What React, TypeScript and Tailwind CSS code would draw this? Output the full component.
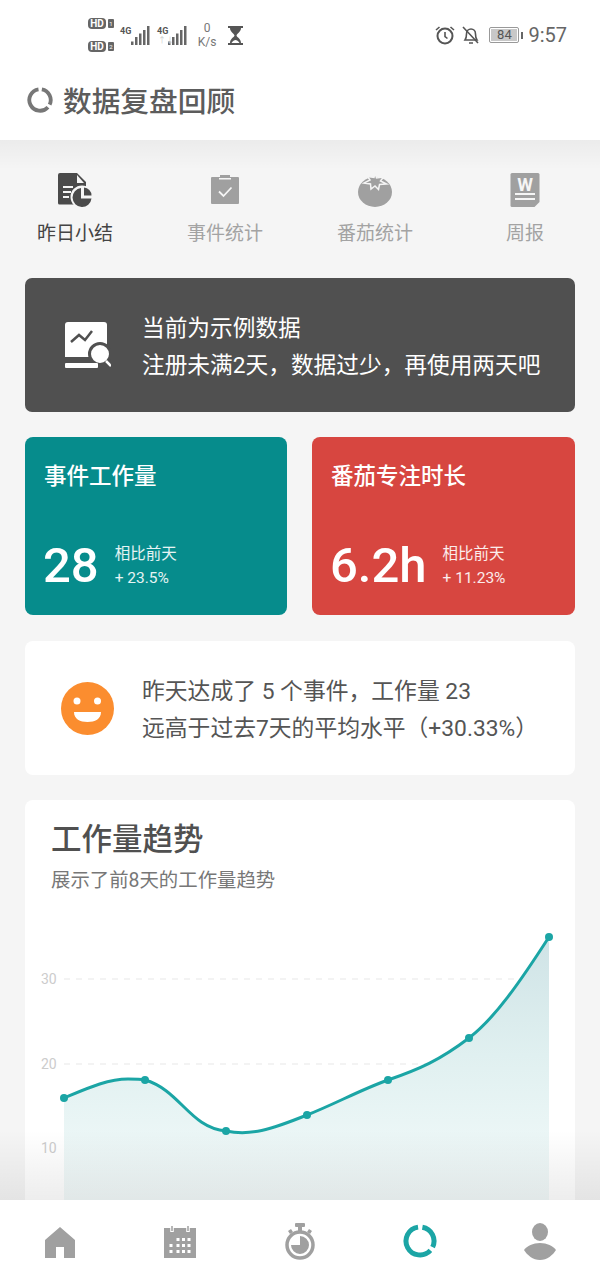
import React from 'react';

function Signal() {
  return (
    <svg width="20" height="19" viewBox="0 0 20 19" className="fill-[#666] shrink-0">
      <rect x="0" y="15.500" width="2.500" height="3.500" />
      <rect x="4" y="11" width="2.500" height="8" />
      <rect x="8" y="7.500" width="2.500" height="11.500" />
      <rect x="12" y="4" width="2.500" height="15" />
      <rect x="16" y="0" width="2.500" height="19" />
    </svg>
  );
}

function HdBadge({ n }: { n: string }) {
  return (
    <div className="flex items-center gap-[2px]">
      <span className="bg-[#666] text-white rounded-[4px] text-[10px] leading-[11px] font-bold w-[18px] text-center">HD</span>
      <span className="bg-[#666] text-white rounded-[1px] text-[6px] leading-[9px] w-[6px] text-center">{n}</span>
    </div>
  );
}

function StatusBar() {
  return (
    <div className="h-[70px] bg-white flex items-center justify-between pl-[88px] pr-[33px] text-[#666]">
      <div className="flex items-center">
        <div className="flex flex-col gap-[12px] w-[26px]">
          <HdBadge n="1" />
          <HdBadge n="2" />
        </div>
        <div className="flex items-start ml-[6px] w-[33px]">
          <span className="text-[9px] leading-[10px] font-bold w-[11px] text-[#555]">4G</span>
          <Signal />
        </div>
        <div className="relative flex items-start ml-[4px] w-[31px]">
          <span className="text-[9px] leading-[10px] font-bold w-[11px] text-[#555]">4G</span>
          <Signal />
          <span className="absolute left-[1px] top-[11px] text-[8px] leading-[8px] text-[#ccc]">↑↓</span>
        </div>
        <div className="flex flex-col items-center w-[22px] ml-[8px] text-[12px] leading-[14px] text-[#777]">
          <span>0</span>
          <span>K/s</span>
        </div>
        <svg width="15" height="19" viewBox="0 0 15 19" className="ml-[10px] fill-[#555]">
          <rect x="0" y="0" width="15" height="2" />
          <rect x="0" y="17" width="15" height="2" />
          <path d="M2 2h11c0 4-4 5.500-4.500 7.500 .5 2 4.500 3 4.500 7.500h-1.500c-1-2-3-3-4-3s-3 1-4 3H2c0-4.500 4-5.500 4.500-7.500C6 7.500 2 6 2 2z" />
        </svg>
      </div>
      <div className="flex items-center">
        <svg width="20" height="20" viewBox="0 0 20 20" fill="none" stroke="#555" strokeWidth="2">
          <circle cx="10" cy="11" r="7.500" />
          <path d="M10 7v4.500l2.500 2" strokeWidth="1.600" />
          <path d="M1 5l3.500-3M19 5l-3.500-3" strokeWidth="1.600" />
        </svg>
        <svg width="20" height="20" viewBox="0 0 20 20" fill="none" stroke="#555" strokeWidth="1.600" className="ml-[6px]">
          <path d="M4 15c1-1.500 1.500-3 1.500-6 0-3 2-5 4.500-5s4.500 2 4.500 5c0 3 .5 4.500 1.500 6z" />
          <path d="M8 18h4M2 2l15 16" />
        </svg>
        <div className="ml-[8px] w-[30px] h-[16px] border border-[#999] rounded-[2px] p-[1px] flex">
          <div className="flex-1 bg-[#c8c8c8] text-[13px] leading-[12px] text-center text-[#555]">84</div>
        </div>
        <div className="w-[2px] h-[7px] bg-[#666] ml-[2px]" />
        <span className="ml-[5px] text-[20px] leading-[24px] text-[#666]">9:57</span>
      </div>
    </div>
  );
}

function Donut({ size, color }: { size: number; color: string }) {
  return (
    <svg width={size} height={size} viewBox="0 0 34 34" fill="none" stroke={color} strokeWidth="5">
      <path d="M19.400 3.200A14 14 0 0 1 29.600 23.100" />
      <path d="M27.400 26.400A14 14 0 1 1 15.050 3.140" />
    </svg>
  );
}

function Header() {
  return (
    <div className="h-[70px] bg-white flex items-start pl-[27px] pt-[17px]">
      <Donut size={26} color="#777777" />
      <span className="ml-[10px] text-[28.700px] leading-[30px] font-medium text-[#5c5c5c]">数据复盘回顾</span>
    </div>
  );
}

function IconReport() {
  return (
    <svg width="34" height="34" viewBox="0 0 34 34">
      <path d="M2 0h17l9 9v21a1.500 1.500 0 0 1-1.500 1.500H1.500A1.500 1.500 0 0 1 0 30V2a2 2 0 0 1 2-2z" fill="#4a4a4a" />
      <path d="M19 2l7 8h-7z" fill="#f5f5f5" />
      <path d="M5 13h10v2H5zM5 18h8v2H5zM5 23h6v2H5z" fill="#f5f5f5" />
      <circle cx="24" cy="24" r="11.500" fill="#f5f5f5" />
      <path d="M23 15a9.500 9.500 0 1 0 10.500 10.500H23z" fill="#4a4a4a" />
      <path d="M26 14.500a8 8 0 0 1 7.500 8H26z" fill="#4a4a4a" />
    </svg>
  );
}

function IconClipboard() {
  return (
    <svg width="34" height="34" viewBox="0 0 34 34">
      <rect x="3" y="4" width="28" height="27" rx="1" fill="#a0a0a0" />
      <rect x="12" y="2" width="10" height="3" fill="#a0a0a0" />
      <rect x="11" y="5" width="12" height="1.500" fill="#f5f5f5" />
      <path d="M11 18.500l4.500 4.500 8-8.500" fill="none" stroke="#f5f5f5" strokeWidth="1.800" />
    </svg>
  );
}

function IconTomato() {
  return (
    <svg width="34" height="34" viewBox="0 0 34 34">
      <ellipse cx="17" cy="19" rx="17" ry="15" fill="#a0a0a0" />
      <path d="M17 0l1.500 5 7-1-3 4 6 3-7 .5-1 5-3.500-3.500-4 3-.5-5-6.500-1 6-3-2.500-3.500 6.500 1z" fill="#a0a0a0" stroke="#f5f5f5" strokeWidth="1.500" />
    </svg>
  );
}

function IconWord() {
  return (
    <svg width="34" height="34" viewBox="0 0 34 34">
      <path d="M4 0h26a1.500 1.500 0 0 1 1.500 1.500V29l-5 5H4a1.500 1.500 0 0 1-1.500-1.500v-31A1.500 1.500 0 0 1 4 0z" fill="#a0a0a0" />
      <text x="17" y="18" textAnchor="middle" fontSize="18" fontWeight="700" fill="#f5f5f5">W</text>
      <path d="M7 21h20M7 26h20" stroke="#f5f5f5" strokeWidth="2" />
    </svg>
  );
}

const tabs = [
  { label: '昨日小结', icon: <IconReport />, active: true },
  { label: '事件统计', icon: <IconClipboard />, active: false },
  { label: '番茄统计', icon: <IconTomato />, active: false },
  { label: '周报', icon: <IconWord />, active: false },
];

function Tabs() {
  return (
    <div className="grid grid-cols-4 pt-[33px]">
      {tabs.map((t) => (
        <div key={t.label} className="flex flex-col items-center">
          {t.icon}
          <span className={`mt-[13px] text-[19px] leading-[28px] ${t.active ? 'text-[#444]' : 'text-[#a3a3a3]'}`}>{t.label}</span>
        </div>
      ))}
    </div>
  );
}

function Banner() {
  return (
    <div className="mt-[30px] mx-[25px] h-[134px] bg-[#505050] rounded-[7px] flex items-center pl-[40px] text-white">
      <svg width="46" height="46" viewBox="0 0 46 46" className="shrink-0">
        <path d="M3 0h36a3 3 0 0 1 3 3v32H0V3a3 3 0 0 1 3-3z" fill="#fff" />
        <path d="M6 20l8-7 6 5 7-9" fill="none" stroke="#505050" strokeWidth="2.500" />
        <circle cx="35" cy="32" r="10.500" fill="#fff" stroke="#505050" strokeWidth="3" />
        <path d="M41 39l5 5" stroke="#fff" strokeWidth="2.500" />
        <rect x="0" y="41" width="33" height="5" rx="1" fill="#fff" />
      </svg>
      <div className="ml-[31px] pt-[4px] text-[22.700px] leading-[37px]">
        <div>当前为示例数据</div>
        <div>注册未满2天，数据过少，再使用两天吧</div>
      </div>
    </div>
  );
}

function StatCard({ title, value, delta, className }: { title: string; value: string; delta: string; className: string }) {
  return (
    <div className={`h-[178px] rounded-[8px] px-[19px] pt-[23px] text-white flex flex-col ${className}`}>
      <div className="text-[22.500px] leading-[32px] font-medium">{title}</div>
      <div className="flex items-center mt-[43px]">
        <span className="text-[49px] leading-[62px] font-medium ml-[-1px]">{value}</span>
        <div className="ml-[16px] text-[15.500px] leading-[24px] text-white/90">
          <div>相比前天</div>
          <div>{delta}</div>
        </div>
      </div>
    </div>
  );
}

function Feedback() {
  return (
    <div className="mt-[26px] mx-[25px] h-[134px] bg-white rounded-[8px] flex items-center pl-[36px] text-[#555]">
      <svg width="53" height="53" viewBox="0 0 53 53" className="shrink-0">
        <circle cx="26.500" cy="26.500" r="26.500" fill="#fb8d2f" />
        <circle cx="16" cy="19" r="3.500" fill="#fff" />
        <circle cx="36.500" cy="19" r="3.500" fill="#fff" />
        <path d="M13 30h27c0 7-6 10-13.500 10S13 37 13 30z" fill="#fff" />
      </svg>
      <div className="ml-[28px] pt-[4px] text-[22.800px] leading-[37px]">
        <div>昨天达成了 5 个事件，工作量 23</div>
        <div>远高于过去7天的平均水平（+30.33%）</div>
      </div>
    </div>
  );
}

const linePath =
  'M64 1098C88 1088 108 1079 128 1079C135 1079 140 1079 145 1080C180 1090 190 1128 226 1131C250 1136 270 1130 307 1115C335 1104 360 1090 388 1080C420 1069 440 1060 469 1038C495 1018 520 982 549 937';
const points = [
  [64, 1098],
  [145, 1080],
  [226, 1131],
  [307, 1115],
  [388, 1080],
  [469, 1038],
  [549, 937],
];

function TrendCard() {
  return (
    <div className="mt-[25px] mx-[25px] bg-white rounded-t-[8px]">
      <div className="pl-[26px] pt-[22px] text-[30.500px] leading-[36px] font-medium text-[#505050]">工作量趋势</div>
      <div className="pl-[26px] mt-[10px] text-[19.400px] leading-[25px] text-[#777]">展示了前8天的工作量趋势</div>
      <svg width="550" height="320" viewBox="25 893 550 320" className="block">
        <defs>
          <linearGradient id="area" x1="0" y1="937" x2="0" y2="1200" gradientUnits="userSpaceOnUse">
            <stop offset="0" stopColor="#cfe3e6" />
            <stop offset="0.45" stopColor="#e0f0f0" />
            <stop offset="0.75" stopColor="#ebf6f6" />
            <stop offset="1" stopColor="#f2f9f9" />
          </linearGradient>
        </defs>
        {[979, 1064, 1148].map((y) => (
          <path key={y} d={`M64 ${y}H548`} stroke="#efefef" strokeWidth="1.500" strokeDasharray="6 6" />
        ))}
        {[
          ['30', 984],
          ['20', 1069],
          ['10', 1153],
        ].map(([t, y]) => (
          <text key={t} x="41" y={y} fontSize="14" fill="#cccccc">
            {t}
          </text>
        ))}
        <path d={`${linePath}V1213H64Z`} fill="url(#area)" />
        <path d={linePath} fill="none" stroke="#1ba5a5" strokeWidth="3" />
        {points.map(([x, y]) => (
          <circle key={x} cx={x} cy={y} r="4" fill="#1ba5a5" />
        ))}
      </svg>
    </div>
  );
}

function BottomNav() {
  return (
    <div className="h-[83px] bg-white grid grid-cols-5 shrink-0 relative z-10">
      <div className="flex justify-center pt-[27px]">
        <svg width="32" height="31" viewBox="0 0 32 31" fill="#a0a0a0">
          <path d="M16 0l15 13v18H20V20h-8v11H1V13z" />
        </svg>
      </div>
      <div className="flex justify-center pt-[25px]">
        <svg width="32" height="33" viewBox="0 0 32 33">
          <path d="M0 3h32v30H0z" fill="#a0a0a0" />
          <path d="M8 0v7M24 0v7" stroke="#fff" strokeWidth="3.500" />
          <path d="M8 1v5M24 1v5" stroke="#a0a0a0" strokeWidth="1.500" />
          <path d="M12.500 13h3v3h-3zM18 13h3v3h-3zM23.500 13h3v3h-3zM5.500 19h3v3h-3zM12.500 19h3v3h-3zM18 19h3v3h-3zM23.500 19h3v3h-3zM5.500 25h3v3h-3zM12.500 25h3v3h-3zM18 25h3v3h-3zM23.500 25h3v3h-3z" fill="#fff" />
        </svg>
      </div>
      <div className="flex justify-center pt-[23px]">
        <svg width="30" height="37" viewBox="0 0 30 37">
          <rect x="10" y="0" width="10" height="4" rx="1" fill="#a0a0a0" />
          <rect x="13" y="3" width="4" height="5" fill="#a0a0a0" />
          <path d="M3 8l3-2 2 3-3 2zM27 8l-3-2-2 3 3 2z" fill="#a0a0a0" />
          <circle cx="15" cy="22" r="13" fill="none" stroke="#a0a0a0" strokeWidth="3.500" />
          <path d="M15 13a9 9 0 1 1-9 9h9z" fill="#a0a0a0" />
        </svg>
      </div>
      <div className="flex justify-center pt-[24px]">
        <Donut size={34} color="#1ba5a5" />
      </div>
      <div className="flex justify-center pt-[23px]">
        <svg width="32" height="37" viewBox="0 0 32 37" fill="#a0a0a0">
          <ellipse cx="16" cy="9" rx="8" ry="9" />
          <path d="M16 20c7 0 13 3 16 7-3 5-9 10-16 10S3 32 0 27c3-4 9-7 16-7z" />
        </svg>
      </div>
    </div>
  );
}

export default function App() {
  return (
    <div className="w-[600px] h-[1283px] flex flex-col overflow-hidden bg-[#f5f5f5] font-['Roboto','Noto_Sans_CJK_SC',sans-serif]">
      <StatusBar />
      <Header />
      <div className="relative flex-1 overflow-hidden min-h-0">
        <Tabs />
        <Banner />
        <div className="mt-[25px] mx-[25px] grid grid-cols-[262px_263px] gap-[25px]">
          <StatCard title="事件工作量" value="28" delta="+ 23.5%" className="bg-[#068c8c]" />
          <StatCard title="番茄专注时长" value="6.2h" delta="+ 11.23%" className="bg-[#d74640]" />
        </div>
        <Feedback />
        <TrendCard />
        {/* soft shadows at the edges of the scroll area */}
        <div className="absolute top-0 inset-x-0 h-[30px] bg-gradient-to-b from-black/[0.04] to-transparent" />
        <div className="absolute bottom-0 inset-x-0 h-[70px] bg-gradient-to-b from-transparent to-black/[0.07]" />
      </div>
      <BottomNav />
    </div>
  );
}
